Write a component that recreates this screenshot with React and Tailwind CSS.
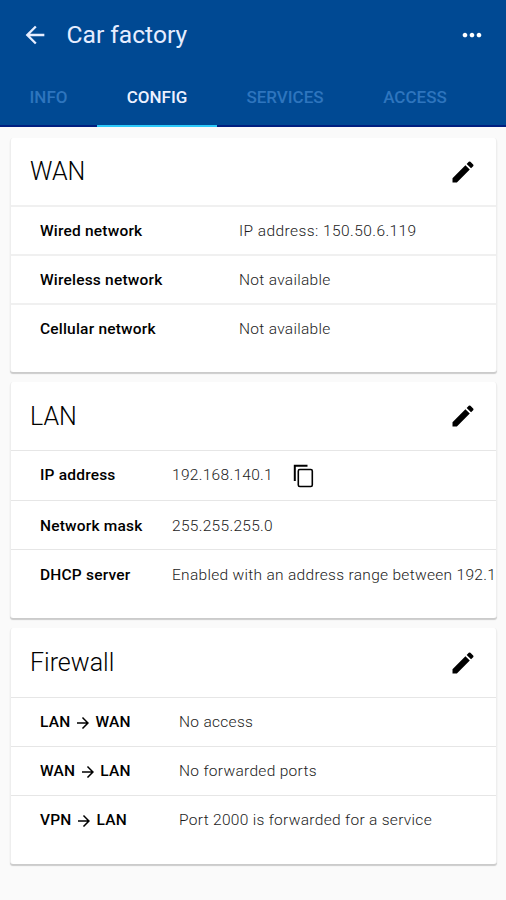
import React from "react"
import { MdArrowBack, MdMoreHoriz, MdEdit, MdArrowForward } from "react-icons/md"

const CopyIcon = () => (
  <svg width="21" height="24" viewBox="0 0 21 24" fill="none" stroke="black">
    <path d="M1.8 17V1.8H14.5" strokeWidth="2" />
    <rect x="5.3" y="5.5" width="14" height="17" rx="1.5" strokeWidth="1.6" />
  </svg>
)

const Arrow = () => <MdArrowForward size={18} className="mx-[3.5px]" />

const Tab = ({ className, children }) => (
  <div className={`flex justify-center pt-[11px] h-[53px] text-[17px] leading-6 whitespace-nowrap ${className}`}>
    {children}
  </div>
)

const Card = ({ title, className, headClass = "h-[68px]", children }) => (
  <section className={`ml-[10px] mr-[9px] flex flex-col rounded-[3px] border-x border-[#eeeeee] bg-white shadow-[0_2px_1px_#cbcbcb] overflow-hidden ${className}`}>
    <div className={`flex shrink-0 items-center justify-between pl-[19px] pr-[19px] ${headClass}`}>
      <h2 className="pt-px text-[25px] font-light leading-8 text-black">{title}</h2>
      <MdEdit size={28} className="text-black" />
    </div>
    {children}
  </section>
)

const Row = ({
  label,
  labelWidth,
  className = "h-[49px] border-t border-[#e6e6e6] pt-[2px]",
  valueClass = "tracking-[0.3px]",
  children,
}) => (
  <div className={`flex shrink-0 items-center pl-[29px] text-[15.5px] whitespace-nowrap ${className}`}>
    <div className={`flex shrink-0 items-center font-medium tracking-[0.2px] text-black ${labelWidth}`}>{label}</div>
    <div className={`flex shrink-0 items-center font-light text-[#1c1c1c] ${valueClass}`}>{children}</div>
  </div>
)

const App = () => {
  return (
    <div className="h-[900px] w-[506px] overflow-hidden bg-[#fafafa] font-['Roboto',sans-serif]">
      <header className="flex h-[127px] flex-col bg-[#004993] text-[#e6edff]">
        <div className="flex h-[73px] items-center pb-[3px] pl-[21px] pr-[20px]">
          <MdArrowBack size={28} />
          <h1 className="ml-[17.5px] text-[24.6px] leading-8">Car factory</h1>
          <MdMoreHoriz size={28} className="ml-auto text-white" />
        </div>
        <nav className="mt-px flex border-b-2 border-[#001f80] h-[53px] font-medium text-[#2e75be]">
          <Tab className="w-[97px]">INFO</Tab>
          <Tab className="w-[120px] border-b-2 border-[#2cc9fa] text-[#edf1ff]">CONFIG</Tab>
          <Tab className="w-[136px]">SERVICES</Tab>
          <Tab className="w-[124px]">ACCESS</Tab>
        </nav>
      </header>

      <main className="flex flex-col gap-[10px] pt-[11px]">
        <Card title="WAN" className="h-[234px]" headClass="h-[67px]">
          <Row label="Wired network" labelWidth="w-[199px]" className="h-[49px] border-t-2 border-[#f0f0f0] pt-[2px]" valueClass="tracking-[0.43px]">IP address: 150.50.6.119</Row>
          <Row label="Wireless network" labelWidth="w-[199px]" className="h-[49px] border-t-2 border-[#f0f0f0] pt-[2px]">Not available</Row>
          <Row label="Cellular network" labelWidth="w-[199px]" className="h-[49px] border-t-2 border-[#f0f0f0] pt-[2px]">Not available</Row>
        </Card>

        <Card title="LAN" className="h-[236px]">
          <Row label="IP address" labelWidth="w-[132px]" className="h-[50px] border-t border-[#e6e6e6] pt-px">
            192.168.140.1
            <span className="ml-[20px]"><CopyIcon /></span>
          </Row>
          <Row label="Network mask" labelWidth="w-[132px]" className="h-[49px] border-t border-[#e6e6e6] pt-[3px]">255.255.255.0</Row>
          <Row label="DHCP server" labelWidth="w-[132px]" className="h-[49px] border-t border-[#e6e6e6] pt-[3px]">Enabled with an address range between 192.1</Row>
        </Card>

        <Card title="Firewall" className="h-[236px]" headClass="h-[69px]">
          <Row label={<>LAN<Arrow />WAN</>} labelWidth="w-[139px]">No access</Row>
          <Row label={<>WAN<Arrow />LAN</>} labelWidth="w-[139px]">No forwarded ports</Row>
          <Row label={<>VPN<Arrow />LAN</>} labelWidth="w-[139px]">Port 2000 is forwarded for a service</Row>
        </Card>
      </main>
    </div>
  )
}

export default App
